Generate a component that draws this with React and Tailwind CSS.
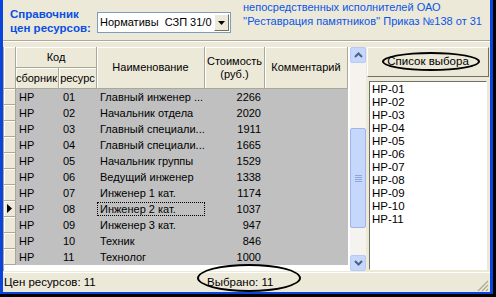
import React from 'react';

const rows = [
    ['HP', '01', 'Главный инженер ...', '2266'],
    ['HP', '02', 'Начальник отдела', '2020'],
    ['HP', '03', 'Главный специали...', '1911'],
    ['HP', '04', 'Главный специали...', '1665'],
    ['HP', '05', 'Начальник группы', '1529'],
    ['HP', '06', 'Ведущий инженер', '1338'],
    ['HP', '07', 'Инженер 1 кат.', '1174'],
    ['HP', '08', 'Инженер 2 кат.', '1037'],
    ['HP', '09', 'Инженер 3 кат.', '947'],
    ['HP', '10', 'Техник', '846'],
    ['HP', '11', 'Технолог', '1000'],
];

const picks = ['HP-01', 'HP-02', 'HP-03', 'HP-04', 'HP-05', 'HP-06', 'HP-07', 'HP-08', 'HP-09', 'HP-10', 'HP-11'];

const headCell = 'flex items-center justify-center border-r border-b border-[#aca899] bg-[#ece9d8] shadow-[inset_1px_1px_0_#ffffff] overflow-hidden whitespace-nowrap';

const Chevron = ({ down }) => (
    <svg width="9" height="6" viewBox="0 0 9 6">
        <path d={down ? 'M1 1 L4.5 4.5 L8 1' : 'M1 5 L4.5 1.5 L8 5'} fill="none" stroke="#4d6185" strokeWidth="2" />
    </svg>
);

export default function App() {
    return (
        <div className="h-[297px] w-[496px] overflow-hidden bg-black font-['Liberation_Sans',Arial,sans-serif] text-[11px] text-black">
            <div className="relative flex h-[294px] w-[493px] flex-col border-b-2 border-l-[3px] border-r-[3px] border-[#0b44dc] bg-[#ece9d8]">
                {/* top bar */}
                <div className="flex h-[40px] shrink-0 items-start overflow-hidden">
                    <div className="w-[94px] whitespace-nowrap pl-[7px] pt-[7px] text-[11.5px] font-bold leading-[14px] text-[#0a4ee4]">
                        Справочник
                        <br />
                        цен ресурсов:
                    </div>
                    <div className="mt-[12px] flex h-[21px] w-[134px] items-center border border-[#7f9db9] bg-white pl-[2px]">
                        <span className="flex-1 overflow-hidden whitespace-nowrap text-[11px]">Нормативы&nbsp; СЗП 31/0</span>
                        <div className="mr-[1px] flex h-[17px] w-[15px] shrink-0 items-center justify-center border border-t-white border-l-white border-r-[#716f64] border-b-[#716f64] bg-[#ece9d8]">
                            <svg width="7" height="4" viewBox="0 0 7 4">
                                <path d="M0 0 H7 L3.5 4 Z" fill="#000" />
                            </svg>
                        </div>
                    </div>
                    <div className="ml-[12px] whitespace-nowrap text-[11px] leading-[14px] text-[#0a55e6]">
                        непосредственных исполнителей ОАО
                        <br />
                        ''Реставрация памятников'' Приказ №138 от 31
                    </div>
                </div>
                <div className="h-[2px] shrink-0 border-t border-b border-t-[#aca899] border-b-white" />

                {/* main */}
                <div className="flex h-[230px] shrink-0 pt-[5px]">
                    <div className="flex h-[224px] w-[363px] border-l border-[#aca899] bg-white">
                        <div className="flex w-[345px] flex-col">
                            {/* header */}
                            <div className="flex h-[42px] shrink-0">
                                <div className={headCell + ' w-[12px]'} />
                                <div className="flex w-[81px] flex-col">
                                    <div className={headCell + ' h-[21px]'}>Код</div>
                                    <div className="flex h-[21px]">
                                        <div className={headCell + ' w-[43px] !justify-end pr-[1px]'}>сборник</div>
                                        <div className={headCell + ' w-[38px]'}>ресурс</div>
                                    </div>
                                </div>
                                <div className={headCell + ' w-[108px]'}>Наименование</div>
                                <div className={headCell + ' w-[60px] flex-col leading-[13px]'}>
                                    <span>Стоимость</span>
                                    <span>(руб.)</span>
                                </div>
                                <div className={headCell + ' w-[83px]'}>Комментарий</div>
                            </div>
                            {/* rows */}
                            {rows.map((r, i) => (
                                <div key={r[1]} className="flex h-[16px] shrink-0">
                                    <div className="flex w-[12px] items-center justify-center border-r border-b border-[#aca899] bg-[#ece9d8] shadow-[inset_1px_1px_0_#ffffff]">
                                        {i === 7 && (
                                            <svg width="5" height="9" viewBox="0 0 5 9">
                                                <path d="M0 0 L5 4.5 L0 9 Z" fill="#000" />
                                            </svg>
                                        )}
                                    </div>
                                    <div className="flex w-[332px] items-center bg-[#c0c0c0] text-[11px] leading-[14px]">
                                        <span className="w-[43px] pl-[3px]">{r[0]}</span>
                                        <span className="w-[38px] pl-[4px]">{r[1]}</span>
                                        <span className={'w-[108px] overflow-hidden whitespace-nowrap ' + (i === 7 ? 'border border-dotted border-black pl-[2px] leading-[12px]' : 'pl-[3px]')}>{r[2]}</span>
                                        <span className="w-[60px] pr-[4px] text-right">{r[3]}</span>
                                    </div>
                                </div>
                            ))}
                        </div>
                        {/* scrollbar */}
                        <div className="ml-[1px] flex w-[16px] flex-col bg-[#f4f3ee]">
                            <div className="flex h-[16px] items-center justify-center rounded-[2px] border border-[#b7caf5] bg-[#c6d7fc]">
                                <Chevron />
                            </div>
                            <div className="mt-[65px] flex h-[100px] items-center justify-center rounded-[2px] border border-[#9fb6ec] bg-[#c6d7fc]">
                                <div className="flex flex-col gap-[1px]">
                                    <div className="h-[1px] w-[7px] bg-[#8ea6e0]" />
                                    <div className="h-[1px] w-[7px] bg-[#8ea6e0]" />
                                    <div className="h-[1px] w-[7px] bg-[#8ea6e0]" />
                                    <div className="h-[1px] w-[7px] bg-[#8ea6e0]" />
                                </div>
                            </div>
                            <div className="flex-1" />
                            <div className="flex h-[16px] items-center justify-center rounded-[2px] border border-[#b7caf5] bg-[#c6d7fc]">
                                <Chevron down />
                            </div>
                        </div>
                    </div>

                    {/* right panel */}
                    <div className="ml-[1px] flex w-[123px] flex-col">
                        <div className="relative flex h-[30px] w-[122px] shrink-0 items-center justify-center border border-t-white border-l-white border-r-[#716f64] border-b-[#716f64] bg-[#ece9d8] text-[11.5px]">
                            Список выбора
                            <div className="absolute left-[14px] top-[4px] h-[19px] w-[98px] rounded-[50%] border-2 border-black" />
                        </div>
                        <div className="ml-[2px] mt-[4px] h-[189px] w-[118px] overflow-hidden border border-t-[#716f64] border-l-[#716f64] border-r-white border-b-white bg-white pl-[2px] pt-[1px] text-[11.5px] leading-[13px]">
                            {picks.map((p) => (
                                <div key={p}>{p}</div>
                            ))}
                        </div>
                    </div>
                </div>

                {/* status bar */}
                <div className="flex h-[20px] shrink-0 items-center border-t border-[#ffffff] text-[11.5px]">
                    <div className="w-[198px] pl-[1px]">Цен ресурсов: 11</div>
                    <div className="pl-[6px]">Выбрано: 11</div>
                    <div className="flex-1" />
                    <svg width="12" height="12" viewBox="0 0 12 12" className="mr-[1px] mt-[6px]">
                        <path d="M11 1 L1 11 M11 5 L5 11 M11 9 L9 11" stroke="#aca899" strokeWidth="1.2" />
                    </svg>
                </div>
                <div className="absolute left-[194px] top-[264px] h-[28px] w-[104px] rounded-[50%] border-2 border-black" />
            </div>
        </div>
    );
}
